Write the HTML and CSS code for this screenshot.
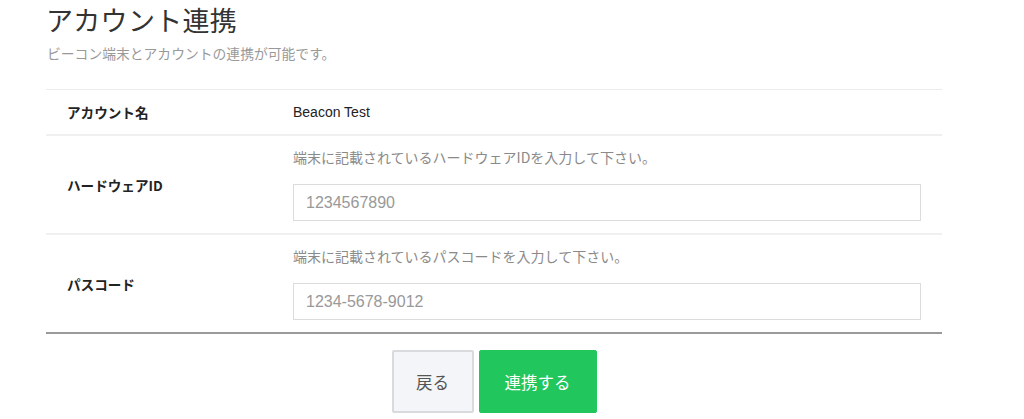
FILE: index.html
```html
<!DOCTYPE html>
<html lang="ja">
<head>
<meta charset="utf-8">
<link rel="stylesheet" href="styles.css">
</head>
<body>
<div class="container">
  <h1 class="title">アカウント連携</h1>
  <p class="lead">ビーコン端末とアカウントの連携が可能です。</p>
  <table class="form-table">
    <tr class="row-plain">
      <th>アカウント名</th>
      <td class="value">Beacon Test</td>
    </tr>
    <tr>
      <th>ハードウェアID</th>
      <td>
        <div class="hint">端末に記載されているハードウェアIDを入力して下さい。</div>
        <input class="field" type="text" placeholder="1234567890">
      </td>
    </tr>
    <tr>
      <th>パスコード</th>
      <td>
        <div class="hint">端末に記載されているパスコードを入力して下さい。</div>
        <input class="field" type="text" placeholder="1234-5678-9012">
      </td>
    </tr>
  </table>
  <div class="actions">
    <button class="btn btn-back">戻る</button>
    <button class="btn btn-primary">連携する</button>
  </div>
</div>
</body>
</html>
```

FILE: styles.css
```css
html, body {
  margin: 0;
  padding: 0;
  background: #fff;
}
body {
  font-family: "Liberation Sans", "Noto Sans CJK JP", sans-serif;
  color: #222;
}
.container {
  width: 896px;
  margin-left: 46px;
}
.title {
  margin: 0;
  padding-top: 3px;
  font-family: "Noto Sans CJK JP", sans-serif;
  font-weight: 400;
  font-size: 27px;
  line-height: 34px;
  color: #333;
  letter-spacing: 0.3px;
}
.lead {
  margin: 6px 0 0;
  padding-left: 1px;
  font-family: "Noto Sans CJK JP", sans-serif;
  font-size: 13.8px;
  line-height: 20px;
  color: #999;
}
.form-table {
  margin-top: 26px;
  width: 100%;
  table-layout: fixed;
  border-collapse: collapse;
  border-bottom: 2px solid #9a9a9a;
}
.form-table tr {
  border-top: 1px solid #ececec;
}
.form-table tr + tr {
  border-top: 2px solid #f0f0f0;
}
.form-table th {
  width: 184px;
  padding: 12px 21px;
  text-align: left;
  vertical-align: middle;
  font-family: "Noto Sans CJK JP", sans-serif;
  font-weight: 700;
  font-size: 13.6px;
  line-height: 20px;
  color: #222;
}
.form-table td {
  padding: 11px 21px 12px;
  vertical-align: middle;
}
.value {
  font-family: "Liberation Sans", "Noto Sans CJK JP", sans-serif;
  font-size: 14px;
  line-height: 20px;
  color: #222;
}
.hint {
  font-family: "Noto Sans CJK JP", sans-serif;
  font-size: 14px;
  line-height: 20px;
  color: #8a8a8a;
  margin-bottom: 17px;
}
.field {
  display: block;
  box-sizing: border-box;
  width: 100%;
  height: 37px;
  margin: 0;
  padding: 0 12px;
  border: 1px solid #dcdcdc;
  border-radius: 0;
  font-family: "Liberation Sans", sans-serif;
  font-size: 16px;
  color: #333;
  background: #fff;
  outline: none;
}
.field::placeholder {
  color: #999;
}
.actions {
  display: flex;
  justify-content: center;
  gap: 5px;
  margin-top: 16px;
}
.btn {
  height: 63px;
  margin: 0;
  font-family: "Noto Sans CJK JP", sans-serif;
  font-size: 16.5px;
  cursor: pointer;
  border-radius: 2px;
}
.btn-back {
  width: 82px;
  background: #f4f5f8;
  border: 2px solid #d8dadd;
  color: #555;
}
.btn-primary {
  width: 118px;
  background: #21c65d;
  border: 1px solid #21c65d;
  color: #fff;
}
```
